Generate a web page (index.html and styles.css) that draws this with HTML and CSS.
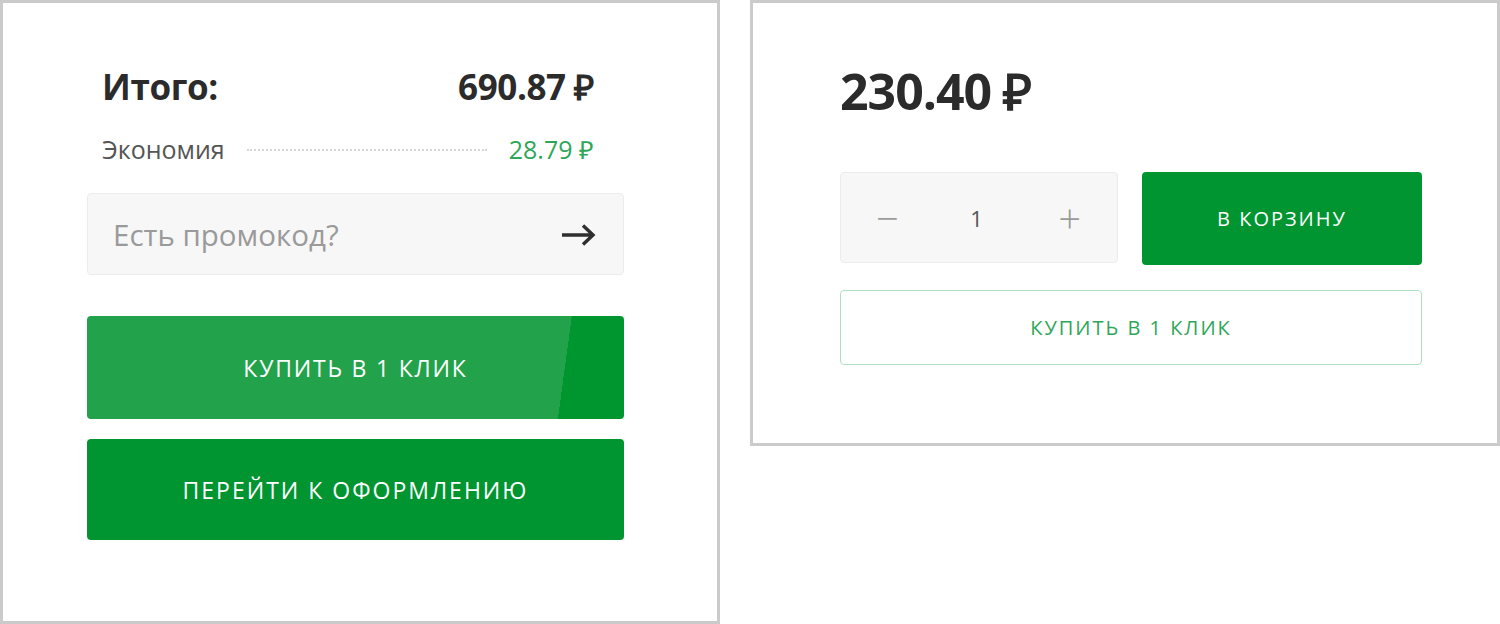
FILE: index.html
```html
<!DOCTYPE html>
<html lang="ru">
<head>
<meta charset="utf-8">
<title>Корзина</title>
<link rel="stylesheet" href="styles.css">
</head>
<body>
<div class="page">
  <section class="panel summary">
    <div class="total-row">
      <span class="total-label">Итого:</span>
      <span class="total-value">690.87 ₽</span>
    </div>
    <div class="save-row">
      <span class="save-label">Экономия</span>
      <span class="dots"></span>
      <span class="save-value">28.79 ₽</span>
    </div>
    <div class="promo">
      <span class="promo-placeholder">Есть промокод?</span>
      <svg class="promo-arrow" width="36" height="26" viewBox="0 0 36 26"><path d="M1 13H32M22 3.5L32 13L22 22.5" fill="none" stroke="#2f2f2f" stroke-width="3.4"/></svg>
    </div>
    <button class="btn btn-quick">КУПИТЬ В 1 КЛИК</button>
    <button class="btn btn-checkout">ПЕРЕЙТИ К ОФОРМЛЕНИЮ</button>
  </section>
  <section class="panel product">
    <div class="price">230.40 ₽</div>
    <div class="buy-row">
      <div class="qty">
        <span class="qty-sign">−</span>
        <span class="qty-num">1</span>
        <span class="qty-sign">+</span>
      </div>
      <button class="btn btn-cart">В КОРЗИНУ</button>
    </div>
    <button class="btn btn-outline">КУПИТЬ В 1 КЛИК</button>
  </section>
</div>
</body>
</html>
```
FILE: styles.css
```css
* { box-sizing: border-box; }
html, body { margin: 0; padding: 0; background: #fff; }
body { font-family: "Open Sans", "Liberation Sans", sans-serif; color: #333; }
.page { display: flex; align-items: flex-start; gap: 30px; width: 1500px; }
.panel { border: 3px solid #cbcbcb; background: #fff; }
.summary { width: 720px; height: 624px; padding: 52px 93px 0 84px; display: flex; flex-direction: column; }
.total-row { display: flex; justify-content: space-between; align-items: center; padding: 0 30px 0 15px; height: 62px; }
.total-label, .total-value { font-weight: 700; font-size: 35px; color: #2b2b2b; letter-spacing: -0.4px; }
.save-row { display: flex; align-items: center; padding: 0 30px 0 15px; height: 40px; margin-top: 12px; }
.save-label { font-size: 25px; color: #555; }
.dots { flex: 1; border-top: 2px dotted #d6d6d6; margin: 2px 22px 0 22px; }
.save-value { font-size: 25px; color: #2ea659; }
.promo { margin-top: 24px; height: 82px; background: #f7f7f7; border: 1px solid #ececec; border-radius: 4px; display: flex; align-items: center; justify-content: space-between; padding: 0 26px 0 25px; }
.promo-placeholder { font-size: 29.5px; color: #9a9a9a; }
.promo-arrow { margin-top: 2px; }
.btn { display: flex; align-items: center; justify-content: center; border: 0; border-radius: 4px; font-family: "Open Sans", "Liberation Sans", sans-serif; color: #fff; cursor: pointer; }
.btn-quick { margin-top: 41px; height: 103px; font-size: 23px; letter-spacing: 1.8px; background: linear-gradient(97.7deg, #22a34b 88%, #00962f 88%); }
.btn-checkout { margin-top: 20px; height: 101px; font-size: 23px; letter-spacing: 2px; background: #009530; }
.product { width: 750px; height: 446px; padding: 56px 75px 0 87px; display: flex; flex-direction: column; }
.price { font-weight: 700; font-size: 50px; color: #2b2b2b; letter-spacing: -1px; line-height: 64px; }
.buy-row { display: flex; gap: 24px; margin-top: 49px; align-items: flex-start; }
.qty { width: 278px; height: 91px; background: #f7f7f7; border: 1px solid #ececec; border-radius: 4px; display: flex; align-items: center; justify-content: space-between; padding: 0 36px 0 35px; }
.qty-sign { font-size: 40px; font-weight: 300; color: #9a9a9a; line-height: 1; }
.qty-num { font-size: 22px; color: #555; margin-right: 4px; }
.btn-cart { width: 280px; height: 93px; background: #009530; font-size: 20px; letter-spacing: 2px; }
.btn-outline { margin-top: 25px; height: 75px; background: #fff; border: 1px solid #ade0c0; color: #2ea659; font-size: 20px; letter-spacing: 2px; }
```
